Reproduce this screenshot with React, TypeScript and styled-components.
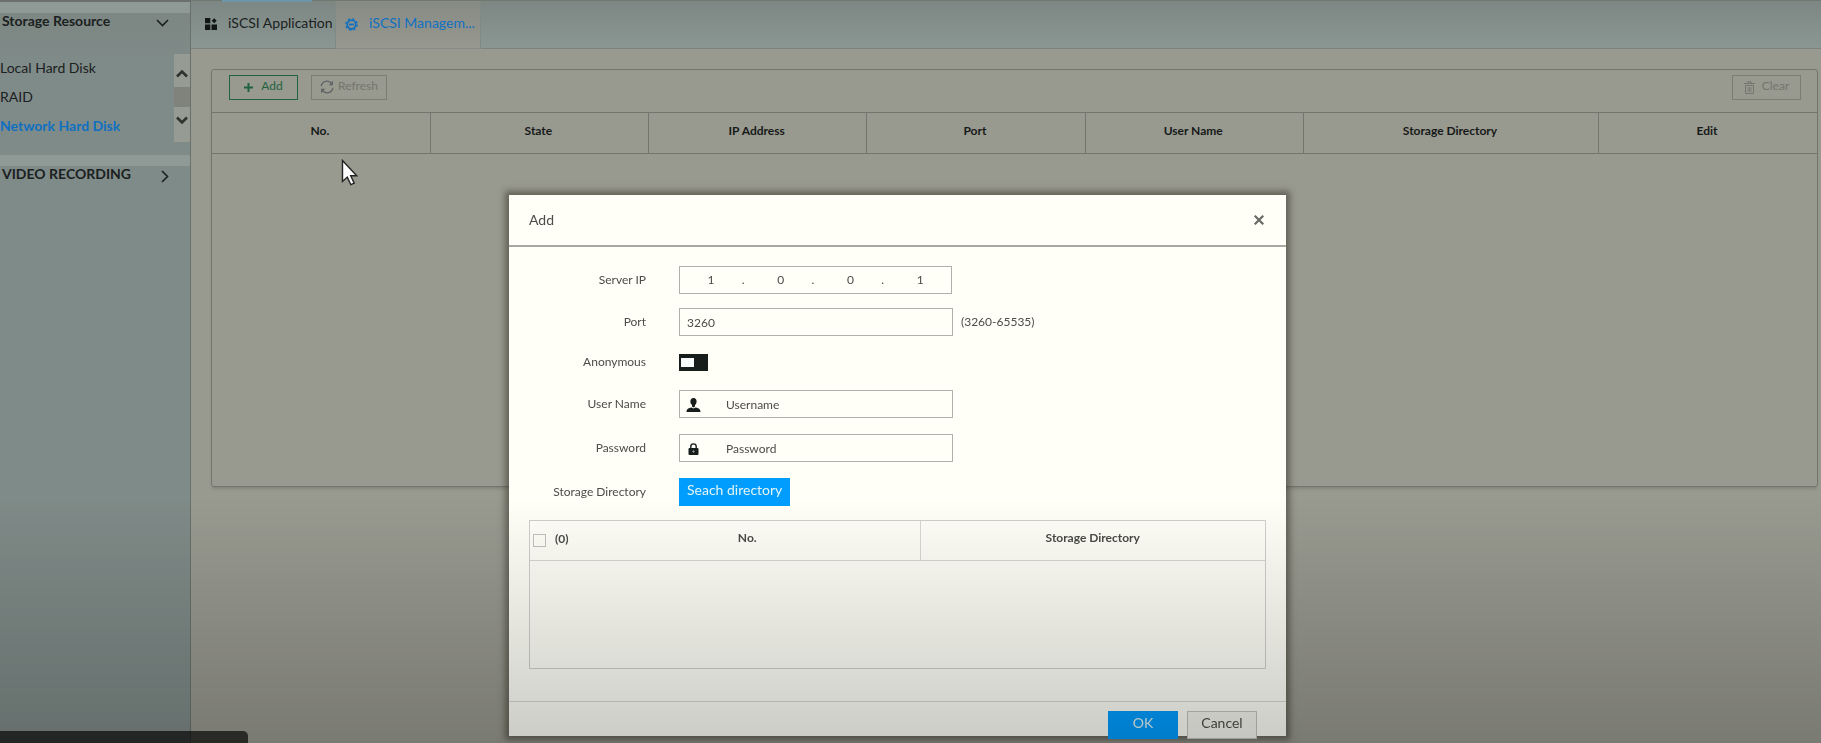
import React from 'react';
import styled, { createGlobalStyle, css } from 'styled-components';

const color = {
  page: '#98998f',
  side: '#7f8b88',
  strip: '#8f9996',
  line: '#74766e',
  ink: '#1b2020',
  blue: '#0f70c2',
  dialog: '#fffff8',
  text: '#4c4c48',
};

const GlobalStyle = createGlobalStyle`
  *, *::before, *::after { box-sizing: border-box; }
  body { margin: 0; overflow: hidden; background: ${color.page}; }
  body, button, input { font-family: Lato, "Open Sans", sans-serif; }
  button { cursor: pointer; }
  svg { display: block; flex: none; }
`;

const Page = styled.div`
  display: flex;
  min-height: 100vh;
  color: ${color.ink};
  font-size: 14px;
  line-height: 20px;
`;

/* ---------- sidebar ---------- */

const Sidebar = styled.nav`
  flex: none;
  width: 191px;
  background: linear-gradient(#7c8683, ${color.side} 60px);
  border-top: 2px solid #6b706c;
  border-right: 1px solid #6a716d;
`;

const SectionHead = styled.button`
  display: flex;
  align-items: center;
  justify-content: space-between;
  width: 100%;
  height: 41px;
  padding: 0 21px 4px 2px;
  border: 0;
  background: linear-gradient(${color.strip} 11px, transparent 11px);
  color: ${color.ink};
  font-size: 14px;
  font-weight: 700;
  line-height: 20px;
  white-space: nowrap;
  svg { margin-top: 5px; }
`;

const SectionBody = styled.div`
  display: flex;
  height: 112px;
  padding: 11px 0;
  justify-content: space-between;
`;

const ItemList = styled.ul`
  margin: 0;
  padding: 0;
  list-style: none;
`;

const Item = styled.li`
  height: 29px;
`;

const ItemLink = styled.a<{ $active?: boolean }>`
  color: ${p => (p.$active ? color.blue : color.ink)};
  font-size: 14px;
  font-weight: ${p => (p.$active ? 700 : 400)};
  line-height: 28px;
  text-decoration: none;
`;

const Scroller = styled.div`
  display: flex;
  flex-direction: column;
  width: 16px;
  height: 88px;
`;

const ScrollButton = styled.button`
  display: flex;
  align-items: center;
  justify-content: center;
  flex: 1;
  width: 16px;
  padding: 6px 0 0;
  border: 0;
  background: #969b93;
  color: #30322f;
  &:last-child { padding: 0 0 8px; }
`;

const ScrollThumb = styled.div`
  height: 20px;
  background: #80837c;
`;

/* ---------- main area ---------- */

const Main = styled.main`
  flex: 1;
  min-width: 0;
`;

const TabBar = styled.div`
  display: flex;
  height: 49px;
  background: linear-gradient(#7c8784, #8b9793);
  border-top: 1px solid #70786f;
`;

const Tab = styled.button<{ $active?: boolean }>`
  display: flex;
  align-items: center;
  gap: 11px;
  width: 145px;
  padding: 0 4px 3px 14px;
  border: 0;
  border-right: 1px solid #7f8a85;
  border-bottom: 1px solid ${p => (p.$active ? 'transparent' : '#7b837c')};
  background: ${p => (p.$active ? 'linear-gradient(#868b85, #97988e)' : 'transparent')};
  color: ${p => (p.$active ? color.blue : color.ink)};
  font-size: 14px;
  line-height: 20px;
  white-space: nowrap;
  ${p => p.$active && css`padding-left: 9px;`}
  svg { margin-top: 2px; }
`;

const TabRest = styled.div`
  flex: 1;
  border-bottom: 1px solid #7b837c;
`;

const Panel = styled.section`
  margin: 20px 3px 0 20px;
  height: 418px;
  border: 1px solid ${color.line};
  border-radius: 3px;
  box-shadow: 0 3px 3px -1px #84857c;
`;

const Toolbar = styled.div`
  display: flex;
  align-items: flex-start;
  gap: 13px;
  height: 42px;
  padding: 5px 16px 0 17px;
`;

const ToolButton = styled.button<{ $tone: 'add' | 'idle'; $end?: boolean }>`
  display: flex;
  align-items: center;
  justify-content: center;
  gap: ${p => (p.$tone === 'add' ? '8px' : '4px')};
  height: 25px;
  padding: 0 8px 3px;
  min-width: 69px;
  border: 1px solid ${p => (p.$tone === 'add' ? '#1f6341' : '#7b7d75')};
  background: transparent;
  color: ${p => (p.$tone === 'add' ? '#1f6341' : '#74766e')};
  font-size: 12px;
  line-height: 16px;
  svg { margin-top: 2px; }
  ${p => p.$end && css`
    gap: 7px;
    margin-left: auto;
  `}
`;

const Grid = styled.table`
  width: 100%;
  border-collapse: collapse;
  table-layout: fixed;
`;

const GridHead = styled.th<{ $wide?: boolean }>`
  width: ${p => (p.$wide ? '18.4%' : '13.6%')};
  height: 41px;
  padding: 0 2px 4px 0;
  border: 1px solid ${color.line};
  border-width: 1px 0 1px 1px;
  color: #161a19;
  font-size: 12px;
  font-weight: 700;
  line-height: 16px;
  &:first-child { border-left: 0; }
`;

/* ---------- dialog ---------- */

const Overlay = styled.div`
  position: fixed;
  inset: 0;
  display: flex;
  align-items: flex-start;
  justify-content: center;
  padding: 195px 26px 0 0;
`;

const Dialog = styled.form`
  width: 777px;
  background: ${color.dialog};
  box-shadow: 0 0 6px 4px rgba(50, 45, 35, 0.5);
  color: ${color.text};
  font-size: 12px;
  line-height: 16px;
`;

const DialogHead = styled.header`
  display: flex;
  align-items: center;
  justify-content: space-between;
  height: 52px;
  padding: 0 20px 0;
  border-bottom: 2px solid #a9a9a4;
`;

const DialogTitle = styled.h2`
  margin: 0;
  font-size: 14px;
  font-weight: 400;
  line-height: 20px;
`;

const CloseButton = styled.button`
  display: flex;
  padding: 2px;
  border: 0;
  background: transparent;
  color: #6a6a64;
`;

const DialogBody = styled.div`
  display: flex;
  flex-direction: column;
  gap: 16px;
  padding: 19px 20px 32px;
`;

const FieldGroup = styled.div<{ $gap: number }>`
  display: flex;
  flex-direction: column;
  gap: ${p => p.$gap}px;
`;

const Row = styled.div<{ $short?: boolean }>`
  display: grid;
  grid-template-columns: 117px 274px auto;
  column-gap: 33px;
  justify-content: start;
  align-items: center;
  height: ${p => (p.$short ? 24 : 28)}px;
`;

const Label = styled.label`
  text-align: right;
  white-space: nowrap;
`;

const Hint = styled.span`
  margin-left: -25px;
`;

const fieldBox = css`
  height: 28px;
  border: 1px solid #b0b0ac;
  background: transparent;
`;

const plainInput = css`
  min-width: 0;
  padding: 0;
  border: 0;
  outline: 0;
  background: transparent;
  color: ${color.text};
  font-size: 12px;
  line-height: 16px;
`;

const TextInput = styled.input`
  ${plainInput}
  ${fieldBox}
  width: 100%;
  padding: 0 7px;
`;

const IpBox = styled.div`
  ${fieldBox}
  display: flex;
  align-items: center;
  margin-right: 1px;
`;

const IpPart = styled.input`
  ${plainInput}
  flex: 1;
  text-align: center;
`;

const IpDot = styled.span`
  width: 8px;
`;

const IconBox = styled.div`
  ${fieldBox}
  display: flex;
  align-items: center;
  gap: 25px;
  padding: 2px 6px 0;
`;

const IconInput = styled.input`
  ${plainInput}
  flex: 1;
  &::placeholder { color: ${color.text}; opacity: 1; }
`;

const Switch = styled.input`
  appearance: none;
  width: 29px;
  height: 17px;
  margin: 0;
  padding: 4px 2px;
  background: #161d1b;
  &::before {
    content: '';
    display: block;
    width: 13px;
    height: 9px;
    background: #f6fafa;
  }
  &:checked::before { margin-left: auto; }
`;

const ActionButton = styled.button<{ $kind: 'primary' | 'plain'; $fit?: boolean }>`
  justify-self: start;
  width: ${p => (p.$fit ? 'auto' : '70px')};
  height: 28px;
  padding: 0 8px 4px;
  border: ${p => (p.$kind === 'primary' ? '0' : '1px solid #c4c4bf')};
  background: ${p => (p.$kind === 'primary' ? '#009dff' : '#f6f6f0')};
  color: ${p => (p.$kind === 'primary' ? '#e2f5f5' : color.text)};
  font-size: 14px;
  line-height: 20px;
  white-space: nowrap;
`;

const DirectoryBox = styled.div`
  margin-top: -2px;
  height: 149px;
  border: 1px solid #d0d0cb;
`;

const DirectoryTable = styled.table`
  width: 100%;
  border-collapse: collapse;
  table-layout: fixed;
`;

const DirectoryHead = styled.th<{ $w?: string; $divider?: boolean }>`
  width: ${p => p.$w ?? 'auto'};
  height: 39px;
  padding: 0 0 4px;
  border-bottom: 1px solid #d9d9d3;
  ${p => p.$divider && css`border-left: 1px solid #d9d9d3;`}
  font-size: 12px;
  font-weight: 700;
  line-height: 16px;
`;

const CheckLabel = styled.label`
  display: flex;
  align-items: center;
  gap: 9px;
  padding: 2px 0 0 3px;
`;

const CheckBox = styled.input`
  appearance: none;
  width: 13px;
  height: 13px;
  margin: 2px 0 0;
  border: 1px solid #c3c3be;
`;

const DialogFoot = styled.footer`
  display: flex;
  justify-content: flex-end;
  gap: 9px;
  height: 35px;
  padding: 9px 29px 0;
  border-top: 1px solid #dadad4;
`;

/* ---------- layers over the page ---------- */

const Shade = styled.div`
  position: fixed;
  inset: auto 0 0 0;
  height: 243px;
  background: linear-gradient(transparent, rgba(0, 0, 0, 0.2));
  pointer-events: none;
`;

const StatusTip = styled.div`
  position: fixed;
  left: 0;
  bottom: 0;
  width: 248px;
  height: 12px;
  border-radius: 0 5px 0 0;
  background: rgba(10, 10, 8, 0.72);
`;

const Pointer = styled.svg`
  position: fixed;
  left: 341px;
  top: 159px;
`;

const LoadMark = styled.div`
  position: fixed;
  left: 222px;
  top: 0;
  width: 90px;
  height: 2px;
  background: #6c95a8;
`;

/* ---------- icons ---------- */

const Chevron = ({ d, w, h, sw }: { d: string; w: number; h: number; sw: number }) => (
  <svg width={w} height={h} viewBox={`0 0 ${w} ${h}`} fill="none" stroke="currentColor" strokeWidth={sw}>
    <path d={d} />
  </svg>
);

const TilesIcon = () => (
  <svg width="12" height="12" viewBox="0 0 12 12" fill="#121716">
    <path d="M0 0h5.3v5.300H0zM0 6.500h5.300V12H0zM6.500 6.500H12V12H6.500zM9.200.3 11.700 2.800 9.200 5.300 6.700 2.800z" />
  </svg>
);

const GearIcon = () => (
  <svg width="13" height="13" viewBox="0 0 13 13" fill="none" stroke="currentColor">
    <circle cx="6.5" cy="6.5" r="4.3" strokeWidth="1.7" />
    <circle cx="6.5" cy="6.5" r="5.7" strokeWidth="1.3" strokeDasharray="2.3 2.18" />
    <path d="M4 6.5h5" strokeWidth="1.8" />
  </svg>
);

const PlusIcon = () => (
  <svg width="9" height="9" viewBox="0 0 9 9" stroke="currentColor" strokeWidth="2">
    <path d="M4.5 0v9M0 4.5h9" />
  </svg>
);

const RefreshIcon = () => (
  <svg width="14" height="14" viewBox="0 0 14 14" fill="none" stroke="#5f6466" strokeWidth="1.3">
    <path d="M1.200 6.200a5.800 5.800 0 0 1 10.600-2.400M12.800 7.800A5.800 5.800 0 0 1 2.200 10.200" />
    <path d="M13 .8v4.400H8.800zM1 13.200V8.800h4.200z" fill="#5f6466" stroke="none" />
  </svg>
);

const TrashIcon = () => (
  <svg width="11" height="13" viewBox="0 0 11 13" fill="none" stroke="currentColor">
    <path d="M0 2.500h11M4 2V.7h3V2M1.500 4.500h8v8h-8z" />
    <path d="M4 6v5M5.500 6v5M7 6v5" strokeWidth=".8" />
  </svg>
);

const UserIcon = () => (
  <svg width="15" height="14" viewBox="0 0 15 14" fill="#161d1b">
    <ellipse cx="7.500" cy="3.600" rx="3.100" ry="3.600" />
    <path d="M6 6.500h3v2l-1.500 1L6 8.500z" />
    <path d="M.5 14c0-2.600 1-3.800 5-4.600l2 1.200 2-1.200c4 .8 5 2 5 4.600z" />
  </svg>
);

const LockIcon = () => (
  <svg width="15" height="12" viewBox="0 0 15 12">
    <path d="M4.800 5.500V3.600a2.700 2.700 0 0 1 5.400 0v1.900" fill="none" stroke="#161d1b" strokeWidth="1.400" />
    <rect x="2.500" y="5" width="10" height="7" rx="1" fill="#161d1b" />
    <path d="M7.500 7v3M6 8.500h3" stroke="#8d928f" strokeWidth=".8" />
  </svg>
);

const CrossIcon = () => (
  <svg width="10" height="10" viewBox="0 0 10 10" stroke="currentColor" strokeWidth="2.200">
    <path d="M.7.700l8.600 8.600M9.300.700.7 9.300" />
  </svg>
);

const columns = ['No.', 'State', 'IP Address', 'Port', 'User Name', 'Storage Directory', 'Edit'];
const address = ['1', '0', '0', '1'];

export default function App() {
  return (
    <>
      <GlobalStyle />
      <Page>
        <Sidebar aria-label="Storage">
          <SectionHead type="button">
            Storage Resource
            <Chevron w={13} h={8} sw={1.6} d="M1 1l5.500 5.500L12 1" />
          </SectionHead>
          <SectionBody>
            <ItemList>
              <Item><ItemLink href="#local">Local Hard Disk</ItemLink></Item>
              <Item><ItemLink href="#raid">RAID</ItemLink></Item>
              <Item><ItemLink href="#network" $active>Network Hard Disk</ItemLink></Item>
            </ItemList>
            <Scroller>
              <ScrollButton type="button" aria-label="Scroll up">
                <Chevron w={12} h={9} sw={2.6} d="M1 7.500l5-5 5 5" />
              </ScrollButton>
              <ScrollThumb />
              <ScrollButton type="button" aria-label="Scroll down">
                <Chevron w={12} h={9} sw={2.6} d="M1 1.500l5 5 5-5" />
              </ScrollButton>
            </Scroller>
          </SectionBody>
          <SectionHead type="button">
            VIDEO RECORDING
            <Chevron w={8} h={13} sw={1.6} d="M1 1l5.500 5.500L1 12" />
          </SectionHead>
        </Sidebar>

        <Main>
          <TabBar role="tablist">
            <Tab type="button" role="tab"><TilesIcon />iSCSI Application</Tab>
            <Tab type="button" role="tab" aria-selected $active><GearIcon />iSCSI Managem...</Tab>
            <TabRest />
          </TabBar>
          <Panel>
            <Toolbar>
              <ToolButton type="button" $tone="add"><PlusIcon />Add</ToolButton>
              <ToolButton type="button" $tone="idle"><RefreshIcon />Refresh</ToolButton>
              <ToolButton type="button" $tone="idle" $end><TrashIcon />Clear</ToolButton>
            </Toolbar>
            <Grid>
              <thead>
                <tr>
                  {columns.map(name => (
                    <GridHead key={name} scope="col" $wide={name === 'Storage Directory'}>{name}</GridHead>
                  ))}
                </tr>
              </thead>
            </Grid>
          </Panel>
        </Main>
      </Page>

      <Pointer width="20" height="28" viewBox="0 0 20 28">
        <path d="M1.500 1.500v21l4.800-4.400 3.600 7.600 3.300-1.500-3.500-7.400h6z" fill="#fff" stroke="#222" strokeWidth="1.400" />
      </Pointer>
      <LoadMark />

      <Overlay>
        <Dialog role="dialog" aria-labelledby="dialog-title" onSubmit={e => e.preventDefault()}>
          <DialogHead>
            <DialogTitle id="dialog-title">Add</DialogTitle>
            <CloseButton type="button" aria-label="Close"><CrossIcon /></CloseButton>
          </DialogHead>
          <DialogBody>
            <FieldGroup $gap={14}>
              <Row>
                <Label htmlFor="ip-0">Server IP</Label>
                <IpBox>
                  {address.map((part, i) => (
                    <React.Fragment key={i}>
                      {i > 0 && <IpDot>.</IpDot>}
                      <IpPart id={`ip-${i}`} aria-label={`Server IP part ${i + 1}`} defaultValue={part} />
                    </React.Fragment>
                  ))}
                </IpBox>
              </Row>
              <Row>
                <Label htmlFor="port">Port</Label>
                <TextInput id="port" defaultValue="3260" />
                <Hint>(3260-65535)</Hint>
              </Row>
              <Row $short>
                <Label htmlFor="anonymous">Anonymous</Label>
                <Switch id="anonymous" type="checkbox" role="switch" />
              </Row>
            </FieldGroup>
            <FieldGroup $gap={16}>
              <Row>
                <Label htmlFor="user">User Name</Label>
                <IconBox><UserIcon /><IconInput id="user" placeholder="Username" /></IconBox>
              </Row>
              <Row>
                <Label htmlFor="password">Password</Label>
                <IconBox><LockIcon /><IconInput id="password" type="password" placeholder="Password" /></IconBox>
              </Row>
              <Row>
                <Label htmlFor="search">Storage Directory</Label>
                <ActionButton id="search" type="button" $kind="primary" $fit>Seach directory</ActionButton>
              </Row>
            </FieldGroup>
            <DirectoryBox>
              <DirectoryTable>
                <thead>
                  <tr>
                    <DirectoryHead scope="col" $w="45px">
                      <CheckLabel><CheckBox type="checkbox" />(0)</CheckLabel>
                    </DirectoryHead>
                    <DirectoryHead scope="col">No.</DirectoryHead>
                    <DirectoryHead scope="col" $divider>Storage Directory</DirectoryHead>
                  </tr>
                </thead>
              </DirectoryTable>
            </DirectoryBox>
          </DialogBody>
          <DialogFoot>
            <ActionButton type="submit" $kind="primary">OK</ActionButton>
            <ActionButton type="button" $kind="plain">Cancel</ActionButton>
          </DialogFoot>
        </Dialog>
      </Overlay>
      <Shade />
      <StatusTip />
    </>
  );
}
